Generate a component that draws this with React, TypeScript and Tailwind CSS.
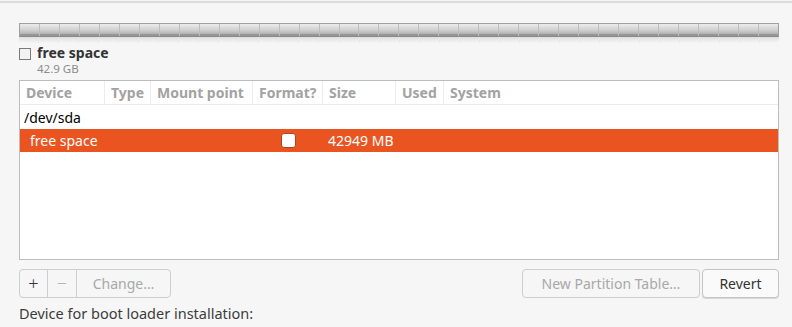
import React from "react";

const columns = [
  { label: "Device", w: "w-[85px]" },
  { label: "Type", w: "w-[46px]" },
  { label: "Mount point", w: "w-[102px]" },
  { label: "Format?", w: "w-[70px]" },
  { label: "Size", w: "w-[73px]" },
  { label: "Used", w: "w-[48px]" },
  { label: "System", w: "flex-1" },
];

function UsageBar() {
  const segments = Array.from({ length: 38 });
  return (
    <div className="flex flex-col">
      <div className="flex h-[14px] border border-[#a0a0a0] border-b-[#8a8a8a] bg-gradient-to-b from-[#ececec] via-[#d0d0d0] to-[#a4a4a4] shadow-[inset_0_-2px_0_#969696]">
        {segments.map((_, i) => (
          <div key={i} className="flex-1 border-r border-[#bdbdbd] last:border-r-0" />
        ))}
      </div>
      <div className="flex h-[6px] bg-gradient-to-b from-[#dedede] to-[#f6f6f6]">
        {segments.map((_, i) => (
          <div key={i} className="flex-1 border-r border-[#e8e8e8] last:border-r-0" />
        ))}
      </div>
    </div>
  );
}

export default function App() {
  return (
    <div
      className="w-[792px] h-[327px] bg-[#f6f6f6] text-[14px] text-[#3c3c3c] overflow-hidden"
      style={{ fontFamily: '"Noto Sans", "DejaVu Sans", sans-serif' }}
    >
      <div className="h-[1px] bg-[#f6f6f6]" />
      <div className="h-[2px] bg-[#dadada]" />
      <div className="pl-[19px] pr-[13px] pt-[20px]">
        <UsageBar />

        <div className="flex items-start gap-[6px] mt-[1px]">
          <div className="mt-[4px] w-[12px] h-[12px] border border-[#7a7a7a] bg-[#f2f2f2]" />
          <div className="flex flex-col">
            <span className="font-bold leading-[18px] text-[#333]">free space</span>
            <span className="text-[11.5px] leading-[14px] text-[#8c8c8c]">42.9 GB</span>
          </div>
        </div>

        <div className="mt-[4px] h-[180px] border border-[#bdbdbd] bg-white flex flex-col">
          <div className="flex h-[24px] border-b border-[#ececec]">
            {columns.map((c, i) => (
              <div
                key={c.label}
                className={`${c.w} flex items-center px-[6px] font-bold text-[#a2a2a2] ${
                  i < columns.length - 1 ? "border-r border-[#ececec]" : ""
                }`}
              >
                {c.label}
              </div>
            ))}
          </div>
          <div className="h-[24px] flex items-center px-[4px] text-black">/dev/sda</div>
          <div className="h-[23px] flex items-center bg-[#e95420] text-white">
            <div className="w-[233px] pl-[10px]">free space</div>
            <div className="w-[70px] flex justify-center">
              <div className="w-[15px] h-[15px] rounded-[3px] border border-[#b6401a] bg-white" />
            </div>
            <div className="pl-[5px]">42949 MB</div>
          </div>
        </div>

        <div className="flex justify-between mt-[9px]">
          <div className="flex h-[29px] border border-[#cdcdcd] rounded-[4px] bg-[#f6f6f6]">
            <div className="w-[28px] flex items-center justify-center border-r border-[#cdcdcd] text-[#333] text-[18px] font-light">
              +
            </div>
            <div className="w-[29px] flex items-center justify-center border-r border-[#cdcdcd] text-[#a8a8a8] text-[18px] font-light">
              −
            </div>
            <div className="w-[93px] flex items-center justify-center text-[#a8a8a8]">Change…</div>
          </div>
          <div className="flex gap-[2px]">
            <div className="w-[178px] h-[29px] flex items-center justify-center border border-[#cdcdcd] rounded-[4px] text-[#a8a8a8]">
              New Partition Table…
            </div>
            <div className="w-[77px] h-[29px] flex items-center justify-center border border-[#c4c4c4] rounded-[4px] bg-[#fafafa] text-[#333] shadow-[0_1px_0_#d8d8d8]">
              Revert
            </div>
          </div>
        </div>

        <div className="mt-[5px] text-[14.5px] text-[#3c3c3c]">Device for boot loader installation:</div>
      </div>
    </div>
  );
}
